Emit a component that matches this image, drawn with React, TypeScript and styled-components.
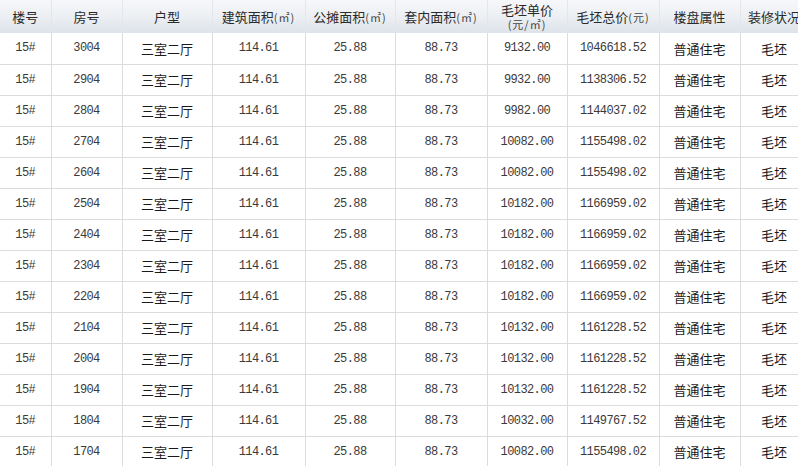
import { ReactElement } from 'react';
import styled, { createGlobalStyle } from 'styled-components';

const GlobalStyle = createGlobalStyle`
  html, body {
    margin: 0;
    padding: 0;
    background: #fff;
    overflow: hidden;
  }
`;

const cols = [51, 71, 90, 93, 90, 92, 80, 92, 81, 68];

const Table = styled.table`
  border-collapse: collapse;
  table-layout: fixed;
  width: ${cols.reduce((a, b) => a + b, 0)}px;
  font-family: 'Noto Sans CJK SC', 'Liberation Sans', sans-serif;
`;

const HeadCell = styled.th`
  height: 33px;
  padding: 0;
  font-size: 13px;
  font-weight: normal;
  line-height: 14px;
  color: #2a2a2a;
  text-align: center;
  white-space: nowrap;
  background: linear-gradient(to bottom, #f6f7f9 0%, #eceff3 50%, #dde3ea 100%);
  border-left: 1px solid #e3e6ea;
  border-right: 1px solid #e3e6ea;
  box-sizing: border-box;

  &:first-child {
    border-left: none;
  }
`;

const Unit = styled.span`
  font-size: 11px;
  letter-spacing: 1px;
  color: #444;
`;

const Row = styled.tr`
  height: 31px;
`;

const Cell = styled.td<{ $cn?: boolean }>`
  padding: 0;
  text-align: center;
  border: 1px solid #dcdcdc;
  border-top: none;
  white-space: nowrap;
  color: ${({ $cn }) => ($cn ? '#1a1a1a' : '#3a3a3a')};
  font-family: ${({ $cn }) =>
    $cn
      ? "'Noto Sans CJK SC', sans-serif"
      : "'Liberation Mono', 'Noto Sans CJK SC', monospace"};
  font-size: ${({ $cn }) => ($cn ? '13px' : '12px')};
  letter-spacing: ${({ $cn }) => ($cn ? '0' : '-0.6px')};

  &:first-child {
    border-left: none;
  }
`;

interface UnitRow {
  room: string;
  unitPrice: string;
  total: string;
}

const units: UnitRow[] = [
  { room: '3004', unitPrice: '9132.00', total: '1046618.52' },
  { room: '2904', unitPrice: '9932.00', total: '1138306.52' },
  { room: '2804', unitPrice: '9982.00', total: '1144037.02' },
  { room: '2704', unitPrice: '10082.00', total: '1155498.02' },
  { room: '2604', unitPrice: '10082.00', total: '1155498.02' },
  { room: '2504', unitPrice: '10182.00', total: '1166959.02' },
  { room: '2404', unitPrice: '10182.00', total: '1166959.02' },
  { room: '2304', unitPrice: '10182.00', total: '1166959.02' },
  { room: '2204', unitPrice: '10182.00', total: '1166959.02' },
  { room: '2104', unitPrice: '10132.00', total: '1161228.52' },
  { room: '2004', unitPrice: '10132.00', total: '1161228.52' },
  { room: '1904', unitPrice: '10132.00', total: '1161228.52' },
  { room: '1804', unitPrice: '10032.00', total: '1149767.52' },
  { room: '1704', unitPrice: '10082.00', total: '1155498.02' },
];

const App = (): ReactElement => {
  return (
    <>
      <GlobalStyle />
      <Table>
        <colgroup>
          {cols.map((w, i) => (
            <col key={i} style={{ width: w }} />
          ))}
        </colgroup>
        <thead>
          <tr>
            <HeadCell>楼号</HeadCell>
            <HeadCell>房号</HeadCell>
            <HeadCell>户型</HeadCell>
            <HeadCell>
              建筑面积<Unit>(㎡)</Unit>
            </HeadCell>
            <HeadCell>
              公摊面积<Unit>(㎡)</Unit>
            </HeadCell>
            <HeadCell>
              套内面积<Unit>(㎡)</Unit>
            </HeadCell>
            <HeadCell>
              毛坯单价
              <br />
              <Unit>(元/㎡)</Unit>
            </HeadCell>
            <HeadCell>
              毛坯总价<Unit>(元)</Unit>
            </HeadCell>
            <HeadCell>楼盘属性</HeadCell>
            <HeadCell>装修状况</HeadCell>
          </tr>
        </thead>
        <tbody>
          {units.map((u) => (
            <Row key={u.room}>
              <Cell>15#</Cell>
              <Cell>{u.room}</Cell>
              <Cell $cn>三室二厅</Cell>
              <Cell>114.61</Cell>
              <Cell>25.88</Cell>
              <Cell>88.73</Cell>
              <Cell>{u.unitPrice}</Cell>
              <Cell>{u.total}</Cell>
              <Cell $cn>普通住宅</Cell>
              <Cell $cn>毛坯</Cell>
            </Row>
          ))}
        </tbody>
      </Table>
    </>
  );
};

export default App;
